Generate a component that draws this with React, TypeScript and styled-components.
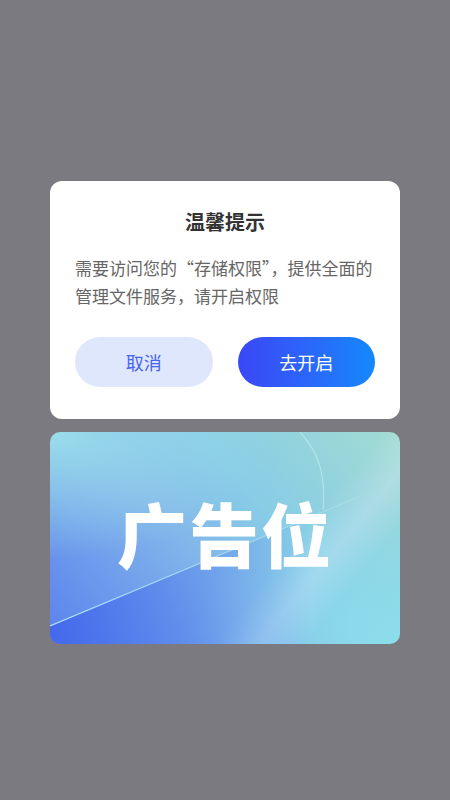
import React from 'react';
import styled, { createGlobalStyle } from 'styled-components';

const GlobalStyle = createGlobalStyle`
  html, body {
    margin: 0;
    padding: 0;
    background: #7b7a80;
  }
  body {
    font-family: "Noto Sans CJK SC", "Noto Sans", sans-serif;
  }
`;

const Page = styled.div`
  min-height: 100vh;
  display: flex;
  flex-direction: column;
  align-items: center;
  padding-top: 181px;
  box-sizing: border-box;
  gap: 13px;
`;

const Dialog = styled.div`
  width: 350px;
  box-sizing: border-box;
  background: #ffffff;
  border-radius: 12px;
  padding: 27px 25px 32px;
  display: flex;
  flex-direction: column;
`;

const Title = styled.div`
  font-size: 20px;
  line-height: 28px;
  font-weight: 700;
  color: #333333;
  text-align: center;
`;

const Message = styled.p`
  margin: 18px 0 0;
  font-size: 17px;
  line-height: 28px;
  color: #666666;
`;

const Actions = styled.div`
  margin-top: 27px;
  display: grid;
  grid-template-columns: 1fr 1fr;
  gap: 25px;
`;

const Button = styled.button<{ $primary?: boolean }>`
  height: 50px;
  border: none;
  border-radius: 25px;
  font-family: inherit;
  font-size: 18px;
  cursor: pointer;
  color: ${(p) => (p.$primary ? '#ffffff' : '#4a63f1')};
  background: ${(p) =>
    p.$primary ? 'linear-gradient(90deg, #3a47f5 0%, #2c66fa 50%, #1588fc 100%)' : '#dfe7fd'};
`;

const AdCard = styled.div`
  position: relative;
  width: 350px;
  height: 212px;
  border-radius: 10px;
  overflow: hidden;
  display: flex;
  align-items: center;
  justify-content: center;
  background:
    linear-gradient(129deg, transparent 64%, rgba(225, 235, 255, 0.28) 73%, transparent 82%),
    radial-gradient(ellipse 65% 60% at 0% 0%, rgba(156, 224, 234, 0.95) 0%, rgba(156, 224, 234, 0) 100%),
    radial-gradient(ellipse 60% 70% at 100% 100%, rgba(140, 222, 236, 1) 0%, rgba(140, 222, 236, 0) 100%),
    linear-gradient(50deg, #5a82ec 0%, #6f9cec 22%, #82b6ea 42%, #88cce6 62%, #a2dcd2 100%);
`;

const AdDecor = styled.svg`
  position: absolute;
  inset: 0;
  width: 100%;
  height: 100%;
`;

const AdText = styled.span`
  position: relative;
  margin-bottom: 10px;
  font-size: 70px;
  font-weight: 900;
  color: #ffffff;
  letter-spacing: 2px;
  line-height: 1;
`;

export default function App() {
  return (
    <>
      <GlobalStyle />
      <Page>
        <Dialog>
          <Title>温馨提示</Title>
          <Message>
            需要访问您的“存储权限”，提供全面的管理文件服务，请开启权限
          </Message>
          <Actions>
            <Button>取消</Button>
            <Button $primary>去开启</Button>
          </Actions>
        </Dialog>
        <AdCard>
          <AdDecor viewBox="0 0 350 212" preserveAspectRatio="none">
            <defs>
              <linearGradient id="lowShade" x1="0" y1="0" x2="1" y2="0">
                <stop offset="0" stopColor="#3c60ec" stopOpacity="0.75" />
                <stop offset="0.45" stopColor="#4a76ec" stopOpacity="0.35" />
                <stop offset="0.75" stopColor="#4a78ec" stopOpacity="0" />
              </linearGradient>
              <linearGradient id="lineFade" x1="0" y1="0" x2="1" y2="0">
                <stop offset="0" stopColor="#b8f0ff" stopOpacity="0.9" />
                <stop offset="0.6" stopColor="#c8f4ff" stopOpacity="0.5" />
                <stop offset="1" stopColor="#ffffff" stopOpacity="0" />
              </linearGradient>
            </defs>
            <path d="M0 194 L220 102 L350 50 L350 212 L0 212 Z" fill="url(#lowShade)" />
            <path d="M0 194 L220 102 L330 56" stroke="url(#lineFade)" strokeWidth="1.2" fill="none" />
            <path
              d="M250 0 C268 20 276 40 273 78"
              stroke="#c6eef0"
              strokeOpacity="0.6"
              strokeWidth="1.2"
              fill="none"
            />
          </AdDecor>
          <AdText>广告位</AdText>
        </AdCard>
      </Page>
    </>
  );
}
